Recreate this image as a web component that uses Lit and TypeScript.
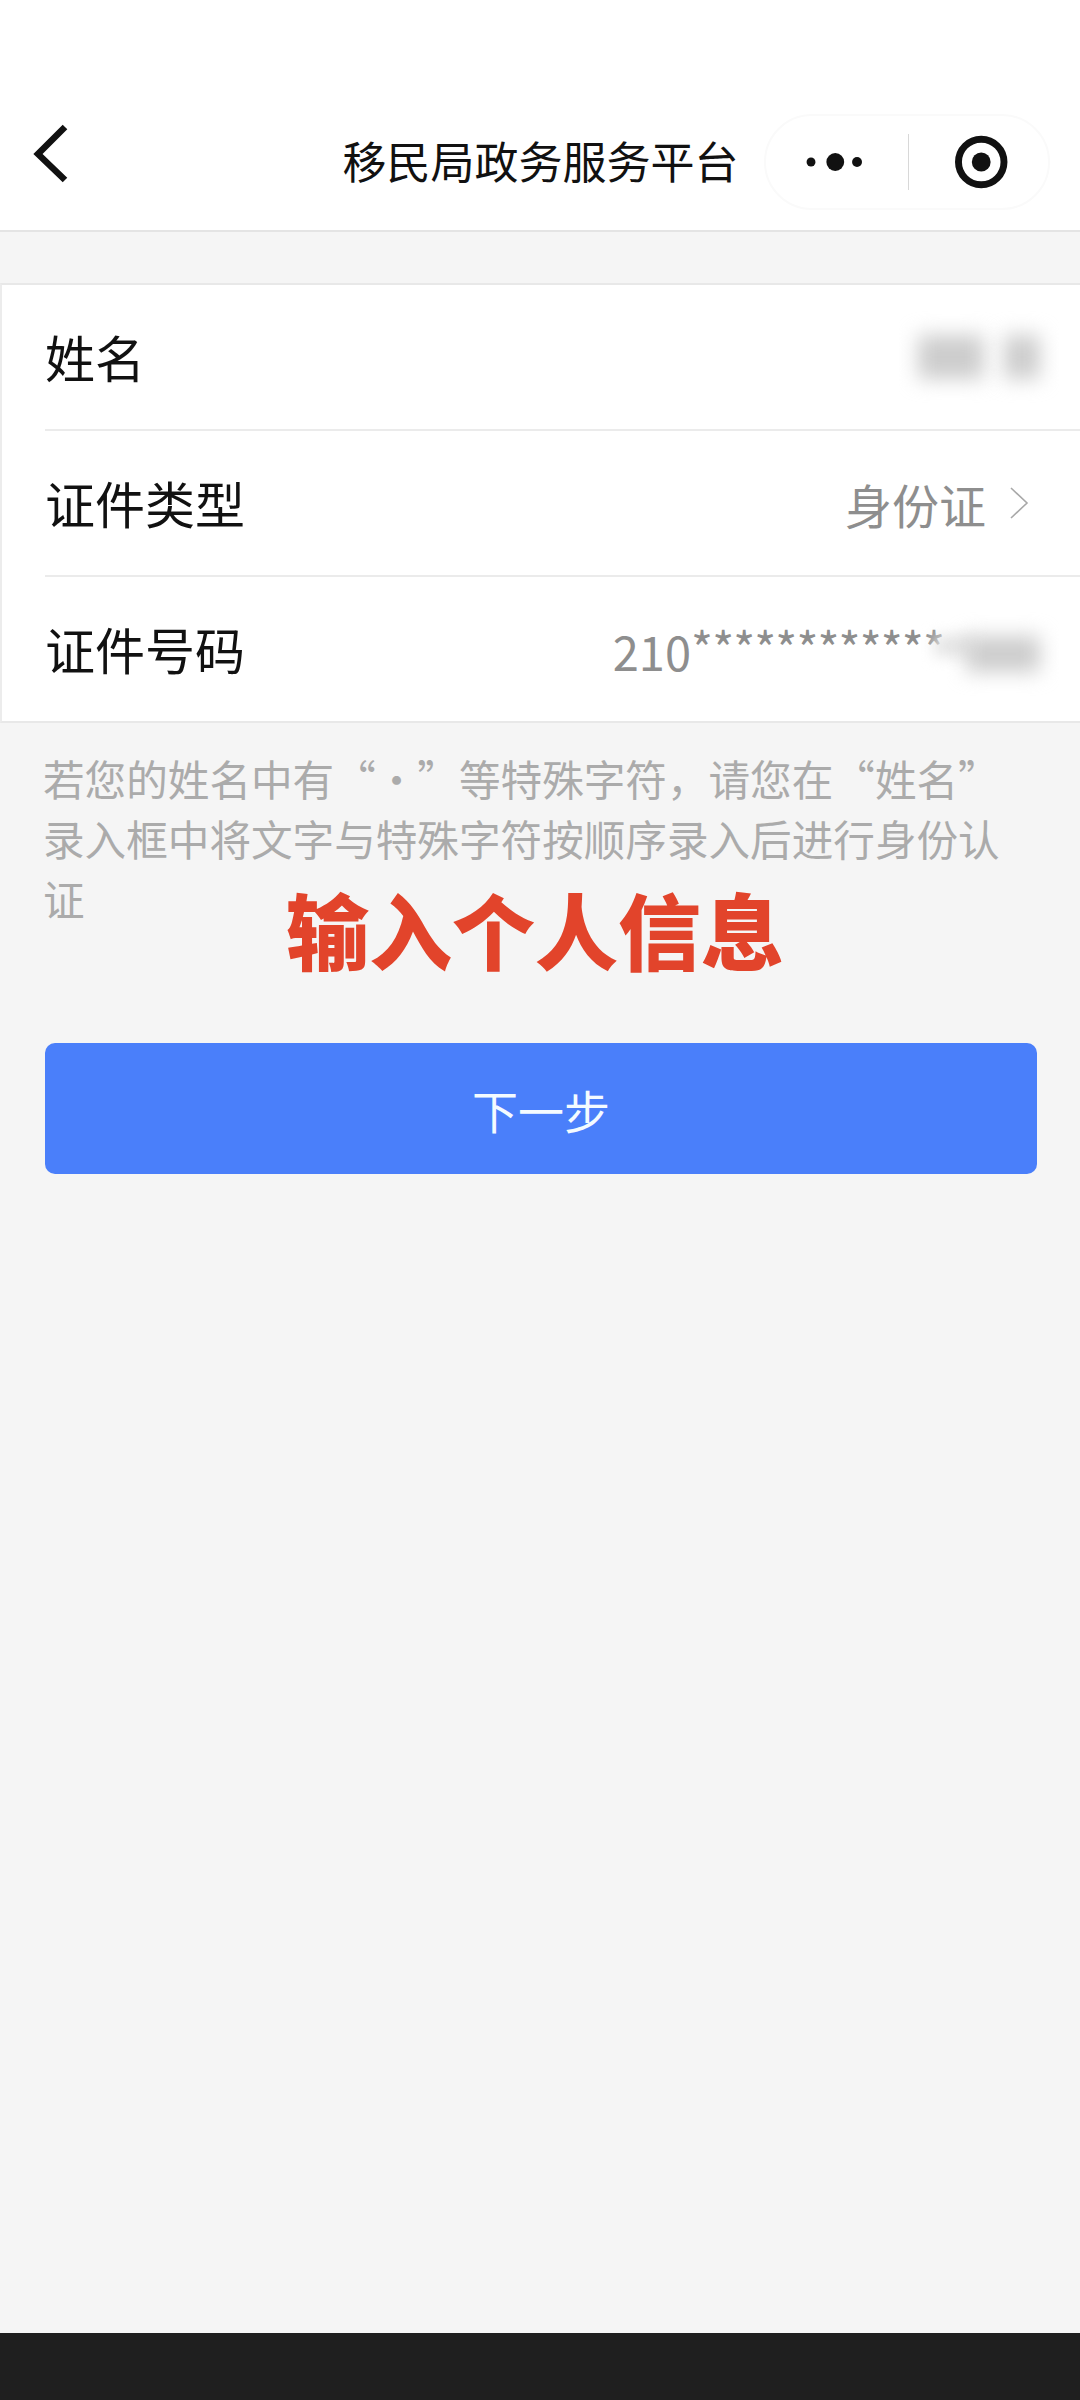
import { LitElement, html, css } from "lit";
import { customElement } from "lit/decorators.js";

@customElement("app-root")
export class AppRoot extends LitElement {
  static styles = css`
    :host {
      display: block;
      width: 1080px;
      height: 2400px;
      font-family: "Noto Sans CJK SC", "Noto Sans", sans-serif;
      background: #f5f5f5;
    }
    .page {
      position: relative;
      height: 2400px;
      display: flex;
      flex-direction: column;
    }
    .header {
      height: 232px;
      box-sizing: border-box;
      padding: 114px 30px 0 31px;
      background: #fff;
      border-bottom: 2px solid #e4e4e4;
      display: grid;
      grid-template-columns: 1fr auto 1fr;
      align-items: start;
    }
    .back { width: 44px; height: 64px; margin-top: 6px; display: block; }
    .title {
      font-size: 44px;
      line-height: 92px;
      color: #111;
      white-space: nowrap;
    }
    .capsule {
      justify-self: end;
      width: 286px;
      height: 96px;
      box-sizing: border-box;
      border: 2px solid #fafafa;
      border-radius: 48px;
      display: flex;
      align-items: center;
    }
    .capsule svg { display: block; }
    .divider { width: 1px; height: 56px; background: #d8d8d8; }
    .card {
      margin-top: 51px;
      background: #fff;
      border-top: 2px solid #e8e8e8;
      border-bottom: 2px solid #e8e8e8;
      border-left: 2px solid #ececec;
    }
    .row {
      height: 144px;
      margin-left: 43px;
      padding-right: 40px;
      display: flex;
      align-items: center;
      justify-content: space-between;
      border-bottom: 2px solid #ebebeb;
    }
    .row:last-child { border-bottom: none; }
    .label { font-size: 50px; color: #111; margin-top: -2px; }
    .value {
      font-size: 47px;
      color: #8e8e8e;
      display: flex;
      align-items: center;
    }
    .stars { letter-spacing: -0.87px; margin-top: -6px; }
    .num { margin-top: 2px; }
    .blur-a, .blur-b, .blur-c {
      background: #cdcdcd;
      filter: blur(10px);
      height: 44px;
    }
    .blur-a { width: 66px; margin-right: 20px; }
    .blur-b { width: 36px; }
    .blur-c { width: 74px; margin-left: -8px; height: 36px; margin-top: 10px; }
    .fade {
      width: 40px;
      height: 22px;
      margin-left: -10px;
      background: #e6e6e6;
      filter: blur(7px);
      margin-top: -6px;
    }
    .chev { width: 20px; height: 34px; margin-left: 23px; margin-right: 11px; display: block; }
    .hint {
      margin: 25px 0 0 43px;
      font-size: 41.6px;
      line-height: 60px;
      color: #ababab;
    }
    .button {
      margin: 115px 43px 0 45px;
      height: 131px;
      background: #4a7ffa;
      border-radius: 10px;
      display: flex;
      align-items: center;
      justify-content: center;
      color: #f4fbff;
      font-size: 46px;
    }
    .spacer { flex: 1; }
    .footer { height: 67px; background: #1f1f1f; }
    .stamp {
      position: absolute;
      left: 286px;
      top: 876px;
      font-size: 83px;
      line-height: 104px;
      font-weight: 900;
      color: #e2442b;
      white-space: nowrap;
    }
  `;

  render() {
    return html`
      <div class="page">
        <div class="header">
          <svg class="back" viewBox="0 0 44 64" fill="none">
            <path d="M34 7 L7 34 L34 60" stroke="#111" stroke-width="6.5" />
          </svg>
          <div class="title">移民局政务服务平台</div>
          <div class="capsule">
            <svg width="144" height="92" viewBox="0 0 144 92">
              <circle cx="45.5" cy="46" r="4.5" fill="#111" />
              <circle cx="70" cy="46" r="9" fill="#111" />
              <circle cx="92" cy="46" r="5" fill="#111" />
            </svg>
            <div class="divider"></div>
            <svg width="140" height="92" viewBox="0 0 140 92">
              <circle cx="73" cy="46" r="23" fill="none" stroke="#111" stroke-width="7" />
              <circle cx="73" cy="46" r="9.5" fill="#111" />
            </svg>
          </div>
        </div>
        <div class="card">
          <div class="row">
            <span class="label">姓名</span>
            <span class="value"><span class="blur-a"></span><span class="blur-b"></span></span>
          </div>
          <div class="row">
            <span class="label">证件类型</span>
            <span class="value">身份证
              <svg class="chev" viewBox="0 0 20 34" fill="none">
                <path d="M2 2 L18 17 L2 32" stroke="#a8a8a8" stroke-width="1.6" />
              </svg>
            </span>
          </div>
          <div class="row">
            <span class="label">证件号码</span>
            <span class="value"><span class="num">210</span><span class="stars">************</span><span class="fade"></span><span class="blur-c"></span></span>
          </div>
        </div>
        <div class="hint">若您的姓名中有“·”等特殊字符，请您在“姓名”<br />录入框中将文字与特殊字符按顺序录入后进行身份认<br />证</div>
        <div class="button">下一步</div>
        <div class="spacer"></div>
        <div class="footer"></div>
        <div class="stamp">输入个人信息</div>
      </div>
    `;
  }
}
